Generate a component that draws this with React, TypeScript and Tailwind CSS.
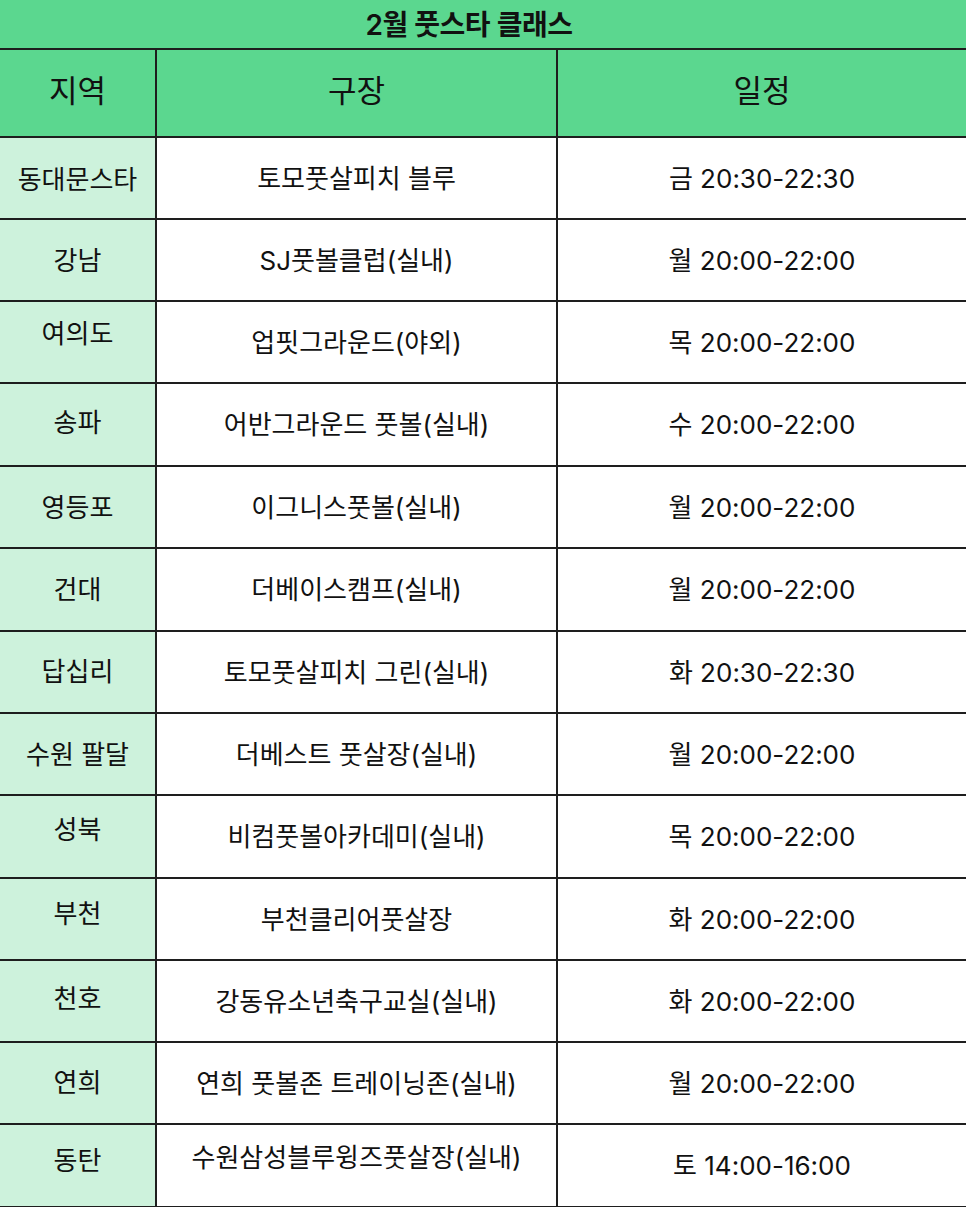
import React from "react";

type Row = { region: string; venue: string; time: string; h: number; off?: number; voff?: number; toff?: number };

const rows: Row[] = [
  { region: "동대문스타", venue: "토모풋살피치 블루", time: "금 20:30-22:30", h: 82, off: -3 },
  { region: "강남", venue: "SJ풋볼클럽(실내)", time: "월 20:00-22:00", h: 82 },
  { region: "여의도", venue: "업핏그라운드(야외)", time: "목 20:00-22:00", h: 82, off: 18 },
  { region: "송파", venue: "어반그라운드 풋볼(실내)", time: "수 20:00-22:00", h: 83, off: 4 },
  { region: "영등포", venue: "이그니스풋볼(실내)", time: "월 20:00-22:00", h: 82 },
  { region: "건대", venue: "더베이스캠프(실내)", time: "월 20:00-22:00", h: 83 },
  { region: "답십리", venue: "토모풋살피치 그린(실내)", time: "화 20:30-22:30", h: 82, off: 2 },
  { region: "수원 팔달", venue: "더베스트 풋살장(실내)", time: "월 20:00-22:00", h: 82 },
  { region: "성북", venue: "비컴풋볼아카데미(실내)", time: "목 20:00-22:00", h: 83, off: 14 },
  { region: "부천", venue: "부천클리어풋살장", time: "화 20:00-22:00", h: 82, off: 12 },
  { region: "천호", venue: "강동유소년축구교실(실내)", time: "화 20:00-22:00", h: 82, off: 6 },
  { region: "연희", venue: "연희 풋볼존 트레이닝존(실내)", time: "월 20:00-22:00", h: 82, off: 2 },
  { region: "동탄", venue: "수원삼성블루윙즈풋살장(실내)", time: "토 14:00-16:00", h: 83, off: 10, voff: 16 },
];

export default function App() {
  return (
    <div
      className="w-[966px] bg-white text-[#111]"
      style={{ fontFamily: '"Inter", "Noto Sans CJK KR", sans-serif' }}
    >
      <div className="h-[50px] bg-[#5bd78f] border-b-2 border-[#1e1e1e] flex items-center justify-center">
        <span className="text-[28px] font-semibold tracking-[-0.5px] mr-[28px] mt-[2px]">2월 풋스타 클래스</span>
      </div>
      <div className="flex h-[88px] bg-[#5bd78f] border-b-2 border-[#1e1e1e]">
        <div className="w-[157px] border-r-2 border-[#1e1e1e] flex items-center justify-center text-[31px] pb-[3px]">
          지역
        </div>
        <div className="w-[401px] border-r-2 border-[#1e1e1e] flex items-center justify-center text-[31px] pb-[3px]">
          구장
        </div>
        <div className="flex-1 flex items-center justify-center text-[31px] pb-[3px]">일정</div>
      </div>
      {rows.map((r, i) => (
        <div
          key={i}
          className="flex border-b-2 border-[#1e1e1e] text-[26px]"
          style={{ height: r.h }}
        >
          <div
            className="w-[157px] bg-[#cdf2dc] border-r-2 border-[#1e1e1e] flex items-center justify-center"
            style={{ paddingBottom: Math.max(0, r.off ?? 0), paddingTop: Math.max(0, -(r.off ?? 0)) }}
          >
            {r.region}
          </div>
          <div
            className="w-[401px] border-r-2 border-[#1e1e1e] flex items-center justify-center"
            style={{ paddingBottom: r.voff ?? 0 }}
          >
            {r.venue}
          </div>
          <div className="flex-1 flex items-center justify-center">{r.time}</div>
        </div>
      ))}
    </div>
  );
}
